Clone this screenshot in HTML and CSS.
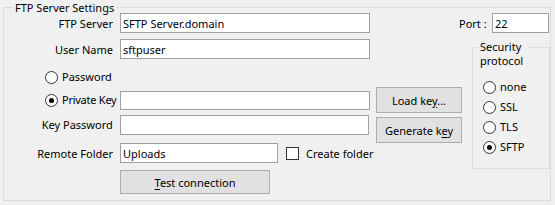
FILE: index.html
```html
<!DOCTYPE html>
<html>
<head>
<meta charset="utf-8">
<link rel="stylesheet" href="styles.css">
</head>
<body>
<fieldset class="settings">
  <legend class="settings-title">FTP Server Settings</legend>
  <div class="layout">
    <div class="left">
      <div class="row row-server">
        <span class="lbl">FTP Server</span>
        <input class="field field-wide" type="text" value="SFTP Server.domain">
      </div>
      <div class="row row-user">
        <span class="lbl">User Name</span>
        <input class="field field-wide" type="text" value="sftpuser">
      </div>
      <div class="row row-pass">
        <span class="radio-cell"><span class="radio"></span><span class="radio-text">Password</span></span>
      </div>
      <div class="row row-key">
        <span class="radio-cell"><span class="radio checked"></span><span class="radio-text tight">Private Key</span></span>
        <input class="field field-wide field-short" type="text" value="">
        <button class="btn btn-load">Load ke<u>y</u>...</button>
      </div>
      <div class="row row-keypass">
        <span class="lbl lbl-top">Key Password</span>
        <input class="field field-wide field-top" type="password" value="">
        <button class="btn btn-gen">Generate k<u>e</u>y</button>
      </div>
      <div class="row row-folder">
        <span class="lbl">Remote Folder</span>
        <input class="field field-folder" type="text" value="Uploads">
        <span class="check"></span>
        <span class="check-text">Create folder</span>
      </div>
      <div class="row row-test">
        <button class="btn btn-test"><u>T</u>est connection</button>
      </div>
    </div>
    <div class="right">
      <div class="port-row">
        <span class="port-lbl">Port :</span>
        <input class="field field-port" type="text" value="22">
      </div>
      <fieldset class="proto">
        <legend class="proto-title">Security protocol</legend>
        <div class="proto-list">
          <div class="proto-item"><span class="radio"></span><span class="radio-text">none</span></div>
          <div class="proto-item"><span class="radio"></span><span class="radio-text">SSL</span></div>
          <div class="proto-item"><span class="radio"></span><span class="radio-text">TLS</span></div>
          <div class="proto-item"><span class="radio checked"></span><span class="radio-text">SFTP</span></div>
        </div>
      </fieldset>
    </div>
  </div>
</fieldset>
</body>
</html>
```

FILE: styles.css
```css
* { box-sizing: border-box; }
html, body {
  margin: 0;
  padding: 0;
  background: #f0f0f0;
}
body {
  width: 555px;
  height: 205px;
  overflow: hidden;
  font-family: "Noto Sans", "Open Sans", sans-serif;
  font-size: 11px;
  color: #000;
}
.settings {
  margin: 0 0 0 3px;
  padding: 0;
  width: 548px;
  height: 201px;
  border: 1px solid #dcdcdc;
  min-inline-size: 0;
}
.settings-title {
  margin-left: 9px;
  padding: 0 2px;
  height: 15px;
  line-height: 15px;
}
.layout {
  margin-top: -2px;
  display: flex;
}
.left {
  width: 458px;
  display: flex;
  flex-direction: column;
}
.right {
  width: 78px;
  margin-left: 10px;
  display: flex;
  flex-direction: column;
}
.row {
  display: flex;
  align-items: center;
}
.lbl {
  width: 109px;
  margin-right: 7px;
  text-align: right;
  white-space: nowrap;
}
.field {
  font: inherit;
  color: #000;
  background: #fff;
  border: 1px solid #a0a0a0;
  border-radius: 0;
  height: 20px;
  padding: 0 2px;
  margin: 0;
  outline: none;
}
.field-wide { width: 250px; }
.field-short { height: 19px; }
.row-server { height: 20px; }
.row-user { height: 20px; margin-top: 6px; }
.row-pass { height: 16px; margin-top: 10px; }
.row-key { height: 26px; margin-top: 2px; }
.row-keypass { height: 28px; margin-top: 2px; align-items: flex-start; }
.row-folder { height: 20px; margin-top: 0; }
.row-test { height: 24px; margin-top: 7px; padding-left: 116px; }
.lbl-top { line-height: 20px; }
.field-top { align-self: flex-start; }
.radio-cell {
  width: 116px;
  padding-left: 41px;
  display: flex;
  align-items: center;
  white-space: nowrap;
  overflow: visible;
}
.radio {
  width: 13px;
  height: 13px;
  border: 1px solid #333;
  border-radius: 50%;
  background: #fff;
  flex: none;
  display: flex;
  align-items: center;
  justify-content: center;
}
.radio.checked::after {
  content: "";
  width: 5px;
  height: 5px;
  border-radius: 50%;
  background: #000;
}
.radio-text {
  margin-left: 4px;
  line-height: 16px;
}
.tight { letter-spacing: -0.25px; }
.btn {
  font: inherit;
  color: #000;
  background: #e1e1e1;
  border: 1px solid #adadad;
  border-radius: 0;
  padding: 0;
  margin: 0;
  text-align: center;
}
.btn u { text-underline-offset: 2px; }
.btn-load {
  width: 86px;
  height: 26px;
  margin-left: 6px;
}
.btn-gen {
  width: 86px;
  height: 26px;
  margin-left: 7px;
  align-self: flex-end;
}
.btn-test {
  width: 150px;
  height: 24px;
}
.field-folder { width: 158px; }
.check {
  width: 13px;
  height: 13px;
  border: 1px solid #333;
  background: #fff;
  margin-left: 8px;
  flex: none;
}
.check-text {
  margin-left: 7px;
  white-space: nowrap;
}
.port-row {
  margin-left: -13px;
  height: 20px;
  display: flex;
  align-items: center;
}
.port-lbl {
  width: 33px;
  white-space: nowrap;
}
.field-port { width: 57px; }
.proto {
  margin: 7px 0 0 0;
  padding: 0;
  width: 78px;
  height: 129px;
  border: 1px solid #dcdcdc;
  min-inline-size: 0;
}
.proto-title {
  margin-left: 5px;
  padding: 0 2px;
  width: 50px;
  height: 15px;
  line-height: 14px;
  text-align: left;
}
.proto-list {
  margin-top: 24px;
  padding-left: 10px;
  display: flex;
  flex-direction: column;
  gap: 4px;
}
.proto-item {
  height: 16px;
  display: flex;
  align-items: center;
}
```
